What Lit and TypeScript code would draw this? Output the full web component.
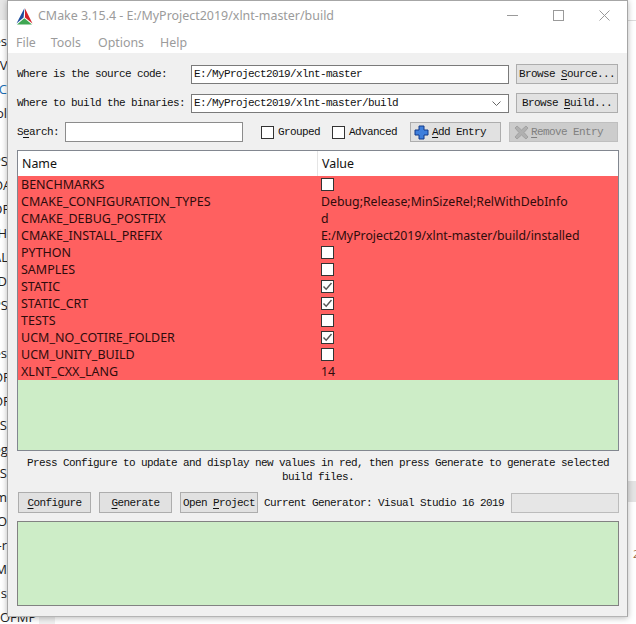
import { LitElement, html, css } from "lit";
import { customElement } from "lit/decorators.js";
import { styleMap } from "lit/directives/style-map.js";

const ROWS: [string, string | boolean][] = [
  ["BENCHMARKS", false],
  ["CMAKE_CONFIGURATION_TYPES", "Debug;Release;MinSizeRel;RelWithDebInfo"],
  ["CMAKE_DEBUG_POSTFIX", "d"],
  ["CMAKE_INSTALL_PREFIX", "E:/MyProject2019/xlnt-master/build/installed"],
  ["PYTHON", false],
  ["SAMPLES", false],
  ["STATIC", true],
  ["STATIC_CRT", true],
  ["TESTS", false],
  ["UCM_NO_COTIRE_FOLDER", true],
  ["UCM_UNITY_BUILD", false],
  ["XLNT_CXX_LANG", "14"],
];

const FRAGS: [number, string, string?][] = [
  [33, "es"], [57, "kV"], [81, "C", "#1a6fb5"], [105, "ol"], [153, "PS"], [177, "OA"], [201, "DP"],
  [225, "H"], [249, "AL"], [273, "D"], [297, "PS"], [345, "es"], [369, "OF"], [393, "OF"],
  [417, "S"], [441, "og"], [465, "S"], [489, "m"], [513, "O"], [537, "-r"], [561, "M"], [585, "Js"],
];

@customElement("app-root")
export class AppRoot extends LitElement {
  static styles = css`
    :host { display: block; position: relative; width: 636px; height: 624px; overflow: hidden; background: #fff; }
    .frag { position: absolute; left: -7px; width: 14px; text-align: right; font: 13px/16px "Open Sans", sans-serif; color: #222; white-space: nowrap; }
    .corner { position: absolute; left: 0; top: 0; width: 7px; height: 20px; background: #e6e6e6; }
    .bottom-txt { position: absolute; left: 0; top: 609px; font: 13px/16px "Open Sans", sans-serif; color: #222; }
    .bottom-bar { position: absolute; left: 39px; top: 616px; width: 16px; height: 8px; background: #f0f0f0; }
    .right-line { position: absolute; left: 628px; top: 20px; width: 8px; height: 1px; background: #dcdcdc; }
    .right-block { position: absolute; left: 628px; top: 481px; width: 8px; height: 21px; background: #e4e4e4; }
    .right-ch { position: absolute; left: 633px; top: 547px; font: 11px/14px "Open Sans", sans-serif; color: #9a6a4a; }

    .win { position: absolute; left: 7px; top: 0; width: 621px; height: 617px; box-sizing: border-box; border: 1px solid #a6a6a6; border-bottom-color: #b4b4b4;
      background: #f0f0f0; display: flex; flex-direction: column; box-shadow: 0 1px 6px rgba(0,0,0,.28); }
    .title { height: 31px; background: #fff; display: flex; align-items: center; padding-left: 8px; box-sizing: border-box;
      font: 12.5px "Noto Sans", sans-serif; color: #9b9b9b; white-space: nowrap; }
    .title .t { flex: 1; margin-left: 5px; padding-bottom: 3px; font-size: 12.45px; }
    .title svg.logo { margin-top: -1px; }
    .ctl { width: 46px; display: flex; justify-content: center; align-items: center; height: 20px; margin-top: -2px; }
    .menu { height: 21px; background: #fff; display: flex; padding-left: 8px; align-items: center; font: 12.4px "Noto Sans", sans-serif; color: #9b9b9b; }
    .menu span:nth-child(2) { margin-left: 15px; }
    .menu span:nth-child(3) { margin-left: 17px; }
    .menu span:nth-child(4) { margin-left: 16px; }

    .body { flex: 1; display: flex; flex-direction: column; padding: 11px 7px 9px 9px; }
    .m { font: 11px/14px "Liberation Mono", monospace; letter-spacing: -0.6px; color: #111; white-space: nowrap; }
    .m u { text-underline-offset: 2px; }
    .path { display: grid; grid-template-columns: 174px 318px 110px; height: 20px; align-items: center; margin-bottom: 9px; width: 602px; }
    .inp { box-sizing: border-box; background: #fff; border: 1px solid #7a7a7a; height: 19px; padding: 0 2px; display: flex; align-items: center; justify-content: space-between; }
    .inp svg { margin-right: 5px; }
    .btn { box-sizing: border-box; height: 20px; background: #e1e1e1; border: 1px solid #adadad; display: flex; align-items: center; justify-content: center; gap: 3px; }
    .path .btn { width: 102px; margin-left: 7px; }
    .tools { display: flex; align-items: center; height: 20px; margin-bottom: 8px; }
    .search { width: 178px; height: 20px; border-color: #8c8c8c; margin: 0 18px 0 6px; }
    .cb { box-sizing: border-box; width: 13px; height: 13px; border: 1px solid #333; background: #fff; flex: none; }
    .tools .cap { margin-left: 4px; }
    .tools .adv { margin-right: 13px; }
    .tools .grp { margin-right: 12px; }
    .add { width: 91px; justify-content: flex-start; padding-left: 3px; margin-right: 8px; }
    .rem { width: 109px; background: #cccccc; border-color: #bfbfbf; justify-content: flex-start; padding-left: 4px; gap: 2px; }
    .rem .m { color: #808080; }

    .table { box-sizing: border-box; width: 602px; height: 301px; border: 1px solid #828790; background: #cdedc7; display: flex; flex-direction: column; }
    .thead { height: 25px; background: #fff; display: grid; grid-template-columns: 300px 1fr; font: 12.4px/25px "Noto Sans", sans-serif; color: #111; }
    .thead div { padding-left: 4px; }
    .thead div:first-child { border-right: 1px solid #e5e5e5; }
    .row { height: 17px; background: #ff6060; display: grid; grid-template-columns: 303px 1fr; font: 12.5px/17px "Noto Sans", sans-serif; color: #2e0c0c; white-space: nowrap; }
    .row .n { padding-left: 3px; }
    .row .v { font-size: 12.3px; }
    .row .cell-cb { display: flex; align-items: center; }
    .check { display: block; }
    .info { height: 41px; box-sizing: border-box; padding-top: 5px; text-align: center; width: 602px; }
    .info .m { white-space: normal; }
    .bar { display: flex; align-items: center; width: 602px; box-sizing: border-box; height: 21px; margin-bottom: 8px; padding-left: 1px; }
    .bar .btn { height: 21px; width: 73px; margin-right: 8px; }
    .bar .open { width: 78px; margin-right: 6px; }
    .bar .gen { flex: 1; }
    .progress { width: 108px; height: 20px; box-sizing: border-box; background: #e6e6e6; border: 1px solid #bcbcbc; }
    .output { box-sizing: border-box; width: 602px; height: 85px; background: #cdedc7; border: 1px solid #828282; }
  `;

  private cb(on: boolean) {
    return html`<div class="cb">${on
      ? html`<svg class="check" width="11" height="11" viewBox="0 0 11 11"><path d="M1.5 5.5 L4.2 8.3 L9.5 2" fill="none" stroke="#555" stroke-width="1.4"/></svg>`
      : ""}</div>`;
  }

  private logo() {
    return html`<svg class="logo" width="17" height="17" viewBox="0 0 17 17">
      <polygon points="8.5,0 0.5,15.5 7.6,9.5" fill="#1d4e9e"/>
      <polygon points="9,0.5 16.5,15.5 9,9.5" fill="#d3222a"/>
      <polygon points="1,16.5 16,16.5 8.4,10.2" fill="#3fa652"/>
      <polygon points="8,9.8 8.6,9.8 9,10.5 8,10.5" fill="#bbb"/>
    </svg>`;
  }

  render() {
    return html`
      <div class="corner"></div>
      ${FRAGS.map(([y, t, c]) => html`<div class="frag" style=${styleMap({ top: y + "px", color: c ?? "#222" })}>${t}</div>`)}
      <div class="bottom-txt">OFMP</div>
      <div class="bottom-bar"></div>
      <div class="right-line"></div>
      <div class="right-block"></div>
      <div class="right-ch">2</div>

      <div class="win">
        <div class="title">
          ${this.logo()}
          <span class="t">CMake 3.15.4 - E:/MyProject2019/xlnt-master/build</span>
          <span class="ctl"><svg width="11" height="11" viewBox="0 0 11 11"><path d="M0 5.5H11" stroke="#9a9a9a"/></svg></span>
          <span class="ctl"><svg width="11" height="11" viewBox="0 0 11 11"><rect x=".5" y=".5" width="10" height="10" fill="none" stroke="#9a9a9a"/></svg></span>
          <span class="ctl"><svg width="11" height="11" viewBox="0 0 11 11"><path d="M.5.5L10.5 10.5M10.5.5L.5 10.5" stroke="#9a9a9a"/></svg></span>
        </div>
        <div class="menu"><span>File</span><span>Tools</span><span>Options</span><span>Help</span></div>
        <div class="body">
          <div class="path">
            <div class="m">Where is the source code:</div>
            <div class="inp m">E:/MyProject2019/xlnt-master</div>
            <div class="btn m"><span>Browse <u>S</u>ource...</span></div>
          </div>
          <div class="path">
            <div class="m">Where to build the binaries:</div>
            <div class="inp m">E:/MyProject2019/xlnt-master/build
              <svg width="9" height="5" viewBox="0 0 9 5"><path d="M.5.5L4.5 4.5L8.5.5" fill="none" stroke="#666"/></svg></div>
            <div class="btn m"><span>Browse <u>B</u>uild...</span></div>
          </div>
          <div class="tools">
            <div class="m">S<u>e</u>arch:</div>
            <div class="inp search"></div>
            ${this.cb(false)}<div class="m cap grp">Grouped</div>
            ${this.cb(false)}<div class="m cap adv">Advanced</div>
            <div class="btn add">
              <svg width="15" height="15" viewBox="0 0 15 15"><path d="M5 1H10V5H14V10H10V14H5V10H1V5H5Z" fill="#3f7fdc" stroke="#123a8a"/></svg>
              <span class="m"><u>A</u>dd Entry</span>
            </div>
            <div class="btn rem">
              <svg width="15" height="15" viewBox="0 0 15 15"><path d="M3 1L7.5 5L12 1L14 3L10 7.5L14 12L12 14L7.5 10L3 14L1 12L5 7.5L1 3Z" fill="#b0b0b0" stroke="#a2a2a2"/></svg>
              <span class="m"><u>R</u>emove Entry</span>
            </div>
          </div>
          <div class="table">
            <div class="thead"><div>Name</div><div>Value</div></div>
            ${ROWS.map(([n, v]) => html`<div class="row"><div class="n">${n}</div>
              ${typeof v === "boolean"
                ? html`<div class="cell-cb">${this.cb(v)}</div>`
                : html`<div class="v">${v}</div>`}</div>`)}
          </div>
          <div class="info"><div class="m">Press Configure to update and display new values in red, then press Generate to generate selected<br>build files.</div></div>
          <div class="bar">
            <div class="btn m"><span><u>C</u>onfigure</span></div>
            <div class="btn m"><span><u>G</u>enerate</span></div>
            <div class="btn m open"><span>Open <u>P</u>roject</span></div>
            <div class="m gen">Current Generator: Visual Studio 16 2019</div>
            <div class="progress"></div>
          </div>
          <div class="output"></div>
        </div>
      </div>
    `;
  }
}
